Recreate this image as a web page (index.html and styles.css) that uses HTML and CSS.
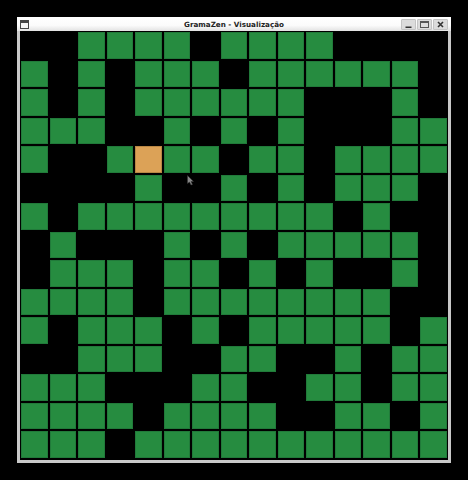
FILE: index.html
```html
<!DOCTYPE html>
<html lang="pt-BR">

<head>
    <meta charset="UTF-8">
    <title>GramaZen - Visualização</title>
    <link rel="stylesheet" href="styles.css">
</head>

<body>
    <div class="window">
        <div class="titlebar">
            <svg class="menu-icon" width="9" height="9" viewBox="0 0 9 9">
                <rect x="0.5" y="0.5" width="8" height="8" fill="#f4f4f4" stroke="#444"/>
                <rect x="1" y="1" width="7" height="2" fill="#444"/>
            </svg>
            <span class="title">GramaZen - Visualização</span>
            <div class="buttons">
                <button class="win-btn">
                    <svg width="9" height="9" viewBox="0 0 9 9"><rect x="1.5" y="6.5" width="6" height="1.5" fill="#333"/></svg>
                </button>
                <button class="win-btn">
                    <svg width="11" height="9" viewBox="0 0 11 9"><rect x="1.5" y="1.5" width="8" height="6" fill="none" stroke="#555"/><rect x="1" y="1" width="9" height="2" fill="#555"/></svg>
                </button>
                <button class="win-btn">
                    <svg width="9" height="9" viewBox="0 0 9 9"><path d="M2 2L7 7M7 2L2 7" stroke="#333" stroke-width="1.6" fill="none"/></svg>
                </button>
            </div>
        </div>
        <div class="board" id="board">
            <svg class="cursor" width="7" height="11" viewBox="0 0 7 11">
                <path d="M0.5 0.5V8.5L2.5 7L4 10L5.5 9.5L4 6.5H6.5Z" fill="#888" stroke="#333" stroke-width="0.5"/>
            </svg>
        </div>
    </div>

    <script src="script.js"></script>
</body>

</html>
```

FILE: styles.css
```css
html,
body {
    height: 100%;
}

body {
    margin: 0;
    padding: 17px;
    box-sizing: border-box;
    background-color: #000;
    overflow: hidden;
}

.window {
    width: 434px;
    height: 446px;
    box-sizing: border-box;
    border: 3px solid #c9c9c9;
    border-top: 0;
    background-color: #000;
}

.titlebar {
    height: 14px;
    margin: 0 -3px;
    padding: 0 3px;
    display: flex;
    align-items: center;
    position: relative;
    background: linear-gradient(#fff, #fbfbfb 60%, #e2e2e2);
}

.menu-icon {
    margin-top: 1px;
}

.title {
    position: absolute;
    left: 0;
    right: 0;
    text-align: center;
    font-family: "DejaVu Sans", sans-serif;
    font-size: 7.2px;
    font-weight: bold;
    color: #222;
}

.buttons {
    margin-left: auto;
    display: flex;
    gap: 1px;
    position: relative;
}

.win-btn {
    width: 15px;
    height: 11px;
    padding: 0;
    display: flex;
    align-items: center;
    justify-content: center;
    background-color: #dcdcdc;
    border: 1px solid #c4c4c4;
    border-radius: 1px;
}

.board {
    width: 428px;
    height: 428px;
    display: grid;
    grid-template-columns: repeat(15, 1fr);
    grid-template-rows: repeat(15, 1fr);
    position: relative;
}

.cell {
    margin: 1px;
    box-sizing: border-box;
    border: 1px solid #217a3a;
}

.grass {
    background-color: #268c40;
}

.player {
    background-color: #dca257;
    border-color: #b98744;
}

.cursor {
    position: absolute;
    left: 167px;
    top: 144px;
}
```

FILE: script.js
```js
// G = grama, P = jogador, . = vazio
const rows = [
    '..GGGG.GGGG....',
    'G.G.GGG.GGGGGG.',
    'G.G.GGGGGG...G.',
    'GGG..G.G.G...GG',
    'G..GPGG.GG.GGGG',
    '....G..G.G.GGG.',
    'G.GGGGGGGGG.G..',
    '.G...G.G.GGGGG.',
    '.GGG.GG.G.G..G.',
    'GGGG.GGGGGGGG..',
    'G.GGG.G.GGGGG.G',
    '..GGG..GG..G.GG',
    'GGG...GG..GG.GG',
    'GGGG.GGGG..GG.G',
    'GGG.GGGGGGGGGGG'
];

const board = document.getElementById('board');

rows.forEach((row) => {
    for (const ch of row) {
        if (ch === '.') {
            board.appendChild(document.createElement('div'));
            continue;
        }
        const cell = document.createElement('div');
        cell.className = ch === 'P' ? 'cell player' : 'cell grass';
        board.appendChild(cell);
    }
});
```
